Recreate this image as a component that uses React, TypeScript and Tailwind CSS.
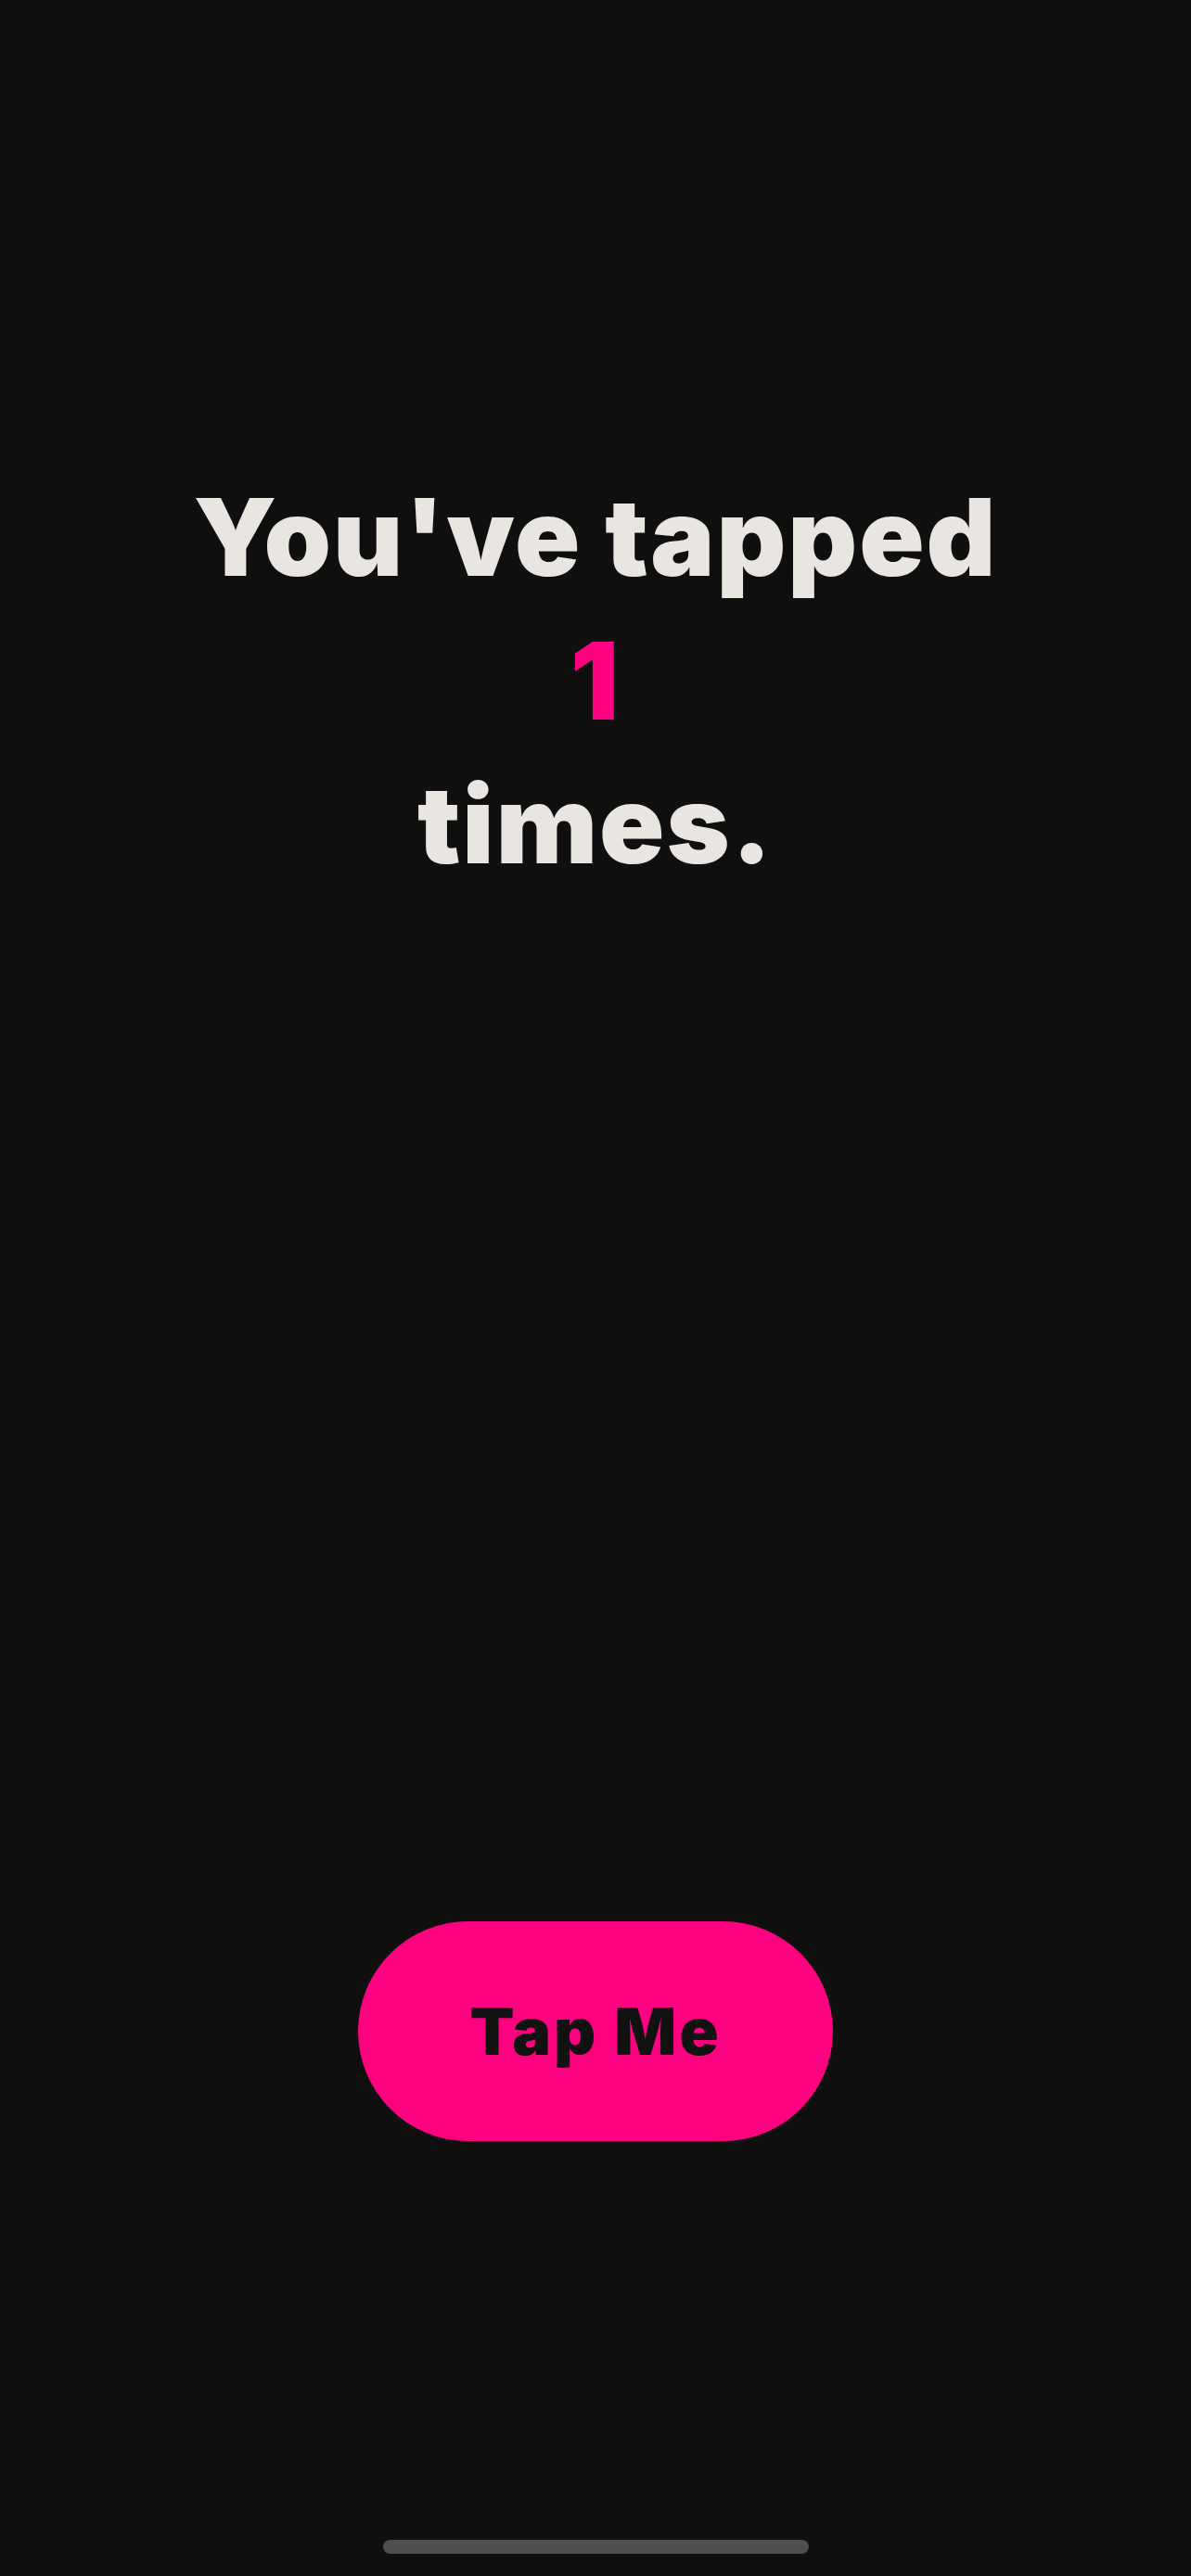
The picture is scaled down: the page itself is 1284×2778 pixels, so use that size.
import { useState } from "react";

export default function App() {
  const [count, setCount] = useState(1);

  return (
    <div className="flex min-h-[2778px] w-full flex-col items-center bg-[#0f0f0f] font-['Inter',sans-serif]">
      <h1 className="mt-[502px] text-center text-[116px] font-black leading-[155px] tracking-[2px] text-[#e9e5e0]">
        <span className="block">You've tapped</span>
        <span className="block text-[#ff0080]">{count}</span>
        <span className="block">times.</span>
      </h1>

      <button
        onClick={() => setCount(count + 1)}
        className="mt-[1105px] flex h-[237px] w-[512px] items-center justify-center rounded-full bg-[#ff0080] text-[70px] font-black tracking-[3px] text-[#111111]"
      >
        Tap Me
      </button>

      <div className="mt-[430px] h-[15px] w-[459px] rounded-full bg-[#4f4f4f]" />
    </div>
  );
}
